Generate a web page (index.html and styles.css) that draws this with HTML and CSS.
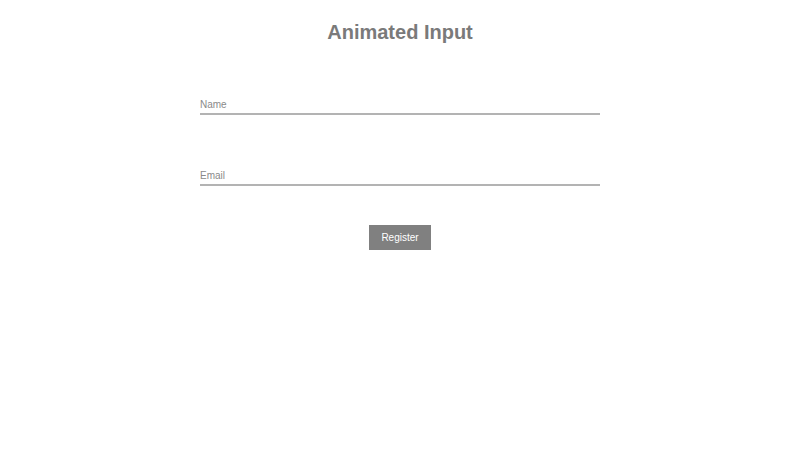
FILE: index.html
```html
<!DOCTYPE html>
<html lang="en">
<head>
  <meta charset="UTF-8">
  <meta name="viewport" content="width=device-width, initial-scale=1.0">
  <title>Animated Input</title>
  <link rel="stylesheet" href="styles.css">
</head>
<body>
  <h1>Animated Input</h1>

  <!-- Register form with floating labels -->
  <form class="form" id="registerForm">
    <div class="field">
      <input type="text" id="name" required>
      <label for="name">Name</label>
    </div>

    <div class="field">
      <input type="email" id="email" required>
      <label for="email">Email</label>
    </div>

    <button type="submit" class="button">Register</button>
  </form>
</body>
</html>
```

FILE: styles.css
```css
/* General Styles */
body {
  font-family: 'Liberation Sans', Arial, sans-serif;
  margin: 0;
  padding: 0;
  background-color: #ffffff;
  color: #808080;
}

h1 {
  text-align: center;
  font-size: 20px;
  line-height: 24px;
  color: #7a7a7a;
  margin: 20px 0 0;
}

.form {
  width: 400px;
  margin: 0 auto;
  display: flex;
  flex-direction: column;
}

.field {
  position: relative;
  margin-top: 49px;
}

.field input {
  display: block;
  width: 100%;
  height: 20px;
  padding: 0;
  border: none;
  border-bottom: 2px solid #b3b3b3;
  outline: none;
  font-family: inherit;
  font-size: 12px;
  color: #555;
  background: transparent;
}

/* label sits on the line, floats up when the input is used */
.field label {
  position: absolute;
  left: 0;
  bottom: 5px;
  font-size: 10px;
  color: #8a8a8a;
  pointer-events: none;
  transition: all 0.3s ease;
}

.field input:focus + label,
.field input:valid + label {
  bottom: 24px;
  font-size: 9px;
}

.field input:focus {
  border-bottom-color: #808080;
}

.button {
  align-self: center;
  margin-top: 39px;
  padding: 0 12px;
  height: 25px;
  background-color: #808080;
  color: #fff;
  border: none;
  font-family: inherit;
  font-size: 10px;
  cursor: pointer;
}
```
